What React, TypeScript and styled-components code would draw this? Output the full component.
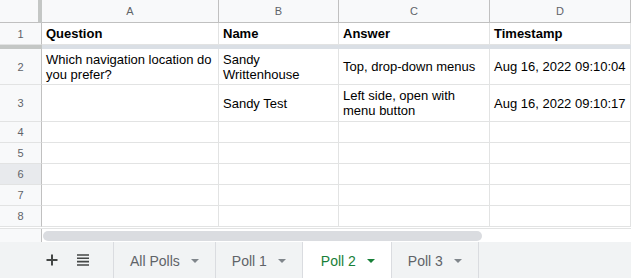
import styled, { createGlobalStyle } from "styled-components";

const GlobalStyle = createGlobalStyle`
  html, body {
    margin: 0;
    padding: 0;
    background: #ffffff;
    overflow: hidden;
  }
  * {
    box-sizing: border-box;
  }
`;

const COLS = "42px 177px 120px 151px 1fr";

const Sheet = styled.div`
  width: 631px;
  height: 278px;
  display: flex;
  flex-direction: column;
  font-family: "Liberation Sans", Arial, sans-serif;
  background: #ffffff;
`;

const Row = styled.div<{ $h: number }>`
  display: grid;
  grid-template-columns: ${COLS};
  height: ${(p) => p.$h}px;
  flex: none;
`;

const Corner = styled.div`
  background: #f8f9fa;
  border-bottom: 1px solid #c0c0c0;
  border-right: 4px solid #c4c7c5;
`;

const ColHead = styled.div`
  background: #f8f9fa;
  border-right: 1px solid #c0c0c0;
  border-bottom: 1px solid #c0c0c0;
  color: #5f6368;
  font-size: 11px;
  display: flex;
  align-items: center;
  justify-content: center;
`;

const RowHead = styled.div<{ $active?: boolean }>`
  background: ${(p) => (p.$active ? "#e8eaed" : "#f8f9fa")};
  border-right: 1px solid #c0c0c0;
  border-bottom: 1px solid #e2e3e3;
  color: #5f6368;
  font-size: 11px;
  display: flex;
  align-items: center;
  justify-content: center;
`;

const Cell = styled.div<{ $bold?: boolean }>`
  border-right: 1px solid #e2e3e3;
  border-bottom: 1px solid #e2e3e3;
  padding: 0 4px;
  font-size: 13px;
  line-height: 15px;
  font-weight: ${(p) => (p.$bold ? 700 : 400)};
  color: #000000;
  display: flex;
  align-items: center;
  overflow: hidden;
`;

const FrozenBand = styled.div`
  display: grid;
  grid-template-columns: 42px 1fr;
  height: 4px;
  flex: none;
`;

const BandHead = styled.div`
  background: #c4c7c5;
`;

const BandBody = styled.div`
  background: #dadfe5;
`;

const ScrollStrip = styled.div`
  display: grid;
  grid-template-columns: 42px 1fr;
  height: 14px;
  flex: none;
  border-top: 1px solid #e2e3e3;
  margin-top: 1px;
`;

const StripHead = styled.div`
  background: #f8f9fa;
  border-right: 1px solid #c0c0c0;
`;

const StripTrack = styled.div`
  padding: 2px 0 0 1px;
`;

const Thumb = styled.div`
  width: 439px;
  height: 10px;
  border-radius: 5px;
  background: #dadce0;
`;

const TabBar = styled.div`
  flex: 1;
  background: #f1f3f4;
  display: flex;
  align-items: stretch;
`;

const Tools = styled.div`
  width: 113px;
  display: flex;
  align-items: center;
  padding-left: 46px;
  gap: 19px;
  color: #444746;
`;

const Tab = styled.div<{ $active?: boolean }>`
  display: flex;
  align-items: center;
  gap: 11px;
  padding: 1px 16px 0 ${(p) => (p.$active ? 18 : 16)}px;
  border-left: 1px solid #dadce0;
  background: ${(p) => (p.$active ? "#ffffff" : "transparent")};
  color: ${(p) => (p.$active ? "#188038" : "#5f6368")};
  font-size: 14px;
  font-weight: ${(p) => (p.$active ? 500 : 400)};
`;

const LastEdge = styled.div`
  border-left: 1px solid #dadce0;
`;

const Caret = styled.span<{ $active?: boolean }>`
  width: 0;
  height: 0;
  border-left: 4.5px solid transparent;
  border-right: 4.5px solid transparent;
  border-top: 4.5px solid ${(p) => (p.$active ? "#188038" : "#80868b")};
  margin-top: 1px;
`;

const PlusIcon = () => (
  <svg width="12" height="12" viewBox="0 0 12 12">
    <path d="M6 0.5v11M0.5 6h11" stroke="currentColor" strokeWidth="2" />
  </svg>
);

const ListIcon = () => (
  <svg width="12" height="12" viewBox="0 0 12 12">
    <path
      d="M0 1h12M0 4.3h12M0 7.6h12M0 11h12"
      stroke="currentColor"
      strokeWidth="1.6"
    />
  </svg>
);

type RowData = { h: number; cells: string[][] };

const rows: RowData[] = [
  { h: 22, cells: [["Question"], ["Name"], ["Answer"], ["Timestamp"]] },
  {
    h: 36,
    cells: [
      ["Which navigation location do", "you prefer?"],
      ["Sandy", "Writtenhouse"],
      ["Top, drop-down menus"],
      ["Aug 16, 2022 09:10:04"],
    ],
  },
  {
    h: 37,
    cells: [
      [],
      ["Sandy Test"],
      ["Left side, open with", "menu button"],
      ["Aug 16, 2022 09:10:17"],
    ],
  },
  { h: 21, cells: [[], [], [], []] },
  { h: 21, cells: [[], [], [], []] },
  { h: 21, cells: [[], [], [], []] },
  { h: 21, cells: [[], [], [], []] },
  { h: 21, cells: [[], [], [], []] },
];

const tabs = ["All Polls", "Poll 1", "Poll 2", "Poll 3"];

export default function App() {
  const renderRow = (r: RowData, i: number) => (
    <Row key={i} $h={r.h}>
      <RowHead $active={i === 5}>{i + 1}</RowHead>
      {r.cells.map((lines, j) => (
        <Cell key={j} $bold={i === 0}>
          <div>
            {lines.map((l, k) => (
              <div key={k}>{l}</div>
            ))}
          </div>
        </Cell>
      ))}
    </Row>
  );

  return (
    <Sheet>
      <GlobalStyle />
      <Row $h={23}>
        <Corner />
        {["A", "B", "C", "D"].map((c) => (
          <ColHead key={c}>{c}</ColHead>
        ))}
      </Row>
      {renderRow(rows[0], 0)}
      <FrozenBand>
        <BandHead />
        <BandBody />
      </FrozenBand>
      {rows.slice(1).map((r, i) => renderRow(r, i + 1))}
      <ScrollStrip>
        <StripHead />
        <StripTrack>
          <Thumb />
        </StripTrack>
      </ScrollStrip>
      <TabBar>
        <Tools>
          <PlusIcon />
          <ListIcon />
        </Tools>
        {tabs.map((t) => (
          <Tab key={t} $active={t === "Poll 2"}>
            {t}
            <Caret $active={t === "Poll 2"} />
          </Tab>
        ))}
        <LastEdge />
      </TabBar>
    </Sheet>
  );
}
